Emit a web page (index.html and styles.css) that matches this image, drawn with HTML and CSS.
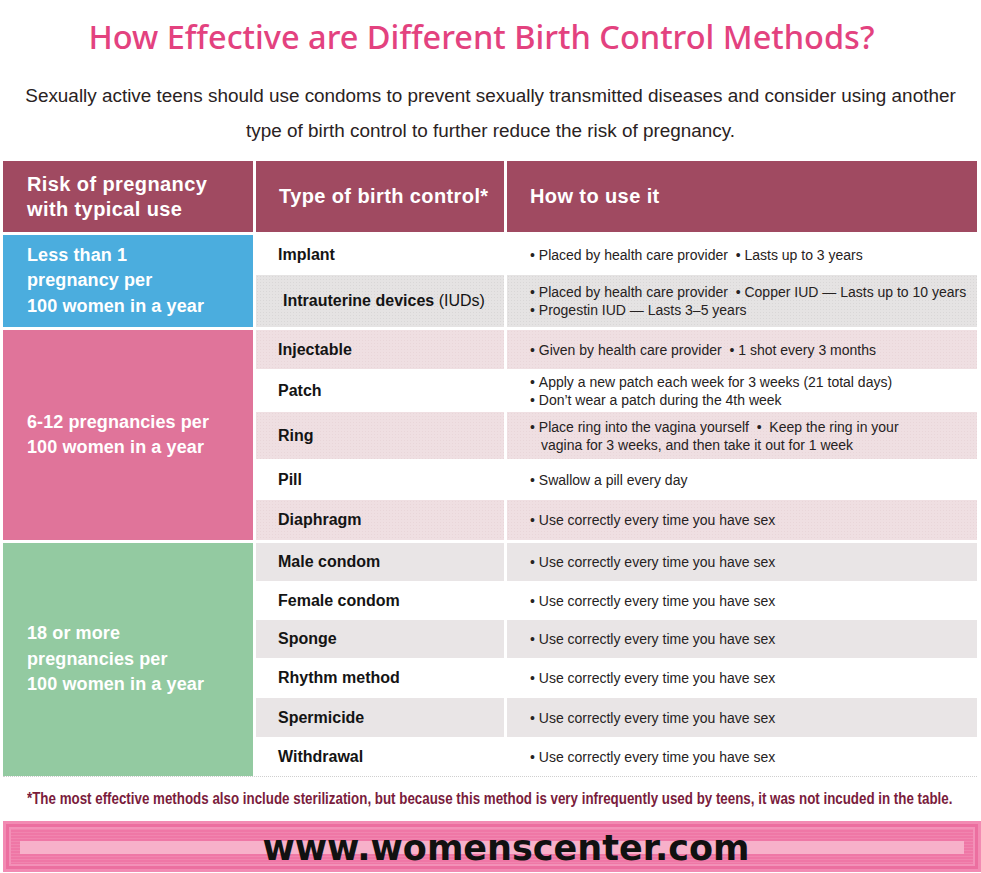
FILE: index.html
```html
<!DOCTYPE html>
<html lang="en">
<head>
<meta charset="utf-8">
<title>How Effective are Different Birth Control Methods?</title>
<link rel="stylesheet" href="styles.css">
</head>
<body>
<h1 class="title">How Effective are Different Birth Control Methods?</h1>
<p class="intro">Sexually active teens should use condoms to prevent sexually transmitted diseases and consider using another<br>type of birth control to further reduce the risk of pregnancy.</p>

<div class="chart">
  <div class="head">
    <div class="hcell hcell-risk">Risk of pregnancy<br>with typical use</div>
    <div class="hcell">Type of birth control*</div>
    <div class="hcell">How to use it</div>
  </div>

  <div class="group">
    <div class="risk risk-blue">Less than 1<br>pregnancy per<br>100 women in a year</div>
    <div class="rows">
      <div class="row r40">
        <div class="method">Implant</div>
        <div class="how">•&nbsp;Placed by health care provider&nbsp;&nbsp;•&nbsp;Lasts up to 3 years</div>
      </div>
      <div class="row r52 alt-gray">
        <div class="method method-indent">Intrauterine devices&nbsp;<span class="light">(IUDs)</span></div>
        <div class="how">•&nbsp;Placed by health care provider&nbsp;&nbsp;•&nbsp;Copper IUD — Lasts up to 10 years<br>•&nbsp;Progestin IUD — Lasts 3–5 years</div>
      </div>
    </div>
  </div>

  <div class="group">
    <div class="risk risk-pink">6-12 pregnancies per<br>100 women in a year</div>
    <div class="rows">
      <div class="row alt-pink">
        <div class="method">Injectable</div>
        <div class="how">•&nbsp;Given by health care provider&nbsp;&nbsp;•&nbsp;1 shot every 3 months</div>
      </div>
      <div class="row r43">
        <div class="method">Patch</div>
        <div class="how">•&nbsp;Apply a new patch each week for 3 weeks (21 total days)<br>•&nbsp;Don’t wear a patch during the 4th week</div>
      </div>
      <div class="row r47 alt-pink">
        <div class="method">Ring</div>
        <div class="how">•&nbsp;Place ring into the vagina yourself&nbsp;&nbsp;•&nbsp;&nbsp;Keep the ring in your<br><span class="cont">vagina for 3 weeks, and then take it out for 1 week</span></div>
      </div>
      <div class="row r41">
        <div class="method">Pill</div>
        <div class="how">•&nbsp;Swallow a pill every day</div>
      </div>
      <div class="row r40 alt-pink">
        <div class="method">Diaphragm</div>
        <div class="how">•&nbsp;Use correctly every time you have sex</div>
      </div>
    </div>
  </div>

  <div class="group group-last">
    <div class="risk risk-green">18 or more<br>pregnancies per<br>100 women in a year</div>
    <div class="rows">
      <div class="row r38 alt-mist">
        <div class="method">Male condom</div>
        <div class="how">•&nbsp;Use correctly every time you have sex</div>
      </div>
      <div class="row">
        <div class="method">Female condom</div>
        <div class="how">•&nbsp;Use correctly every time you have sex</div>
      </div>
      <div class="row r38 alt-mist">
        <div class="method">Sponge</div>
        <div class="how">•&nbsp;Use correctly every time you have sex</div>
      </div>
      <div class="row r40">
        <div class="method">Rhythm method</div>
        <div class="how">•&nbsp;Use correctly every time you have sex</div>
      </div>
      <div class="row alt-mist">
        <div class="method">Spermicide</div>
        <div class="how">•&nbsp;Use correctly every time you have sex</div>
      </div>
      <div class="row">
        <div class="method">Withdrawal</div>
        <div class="how">•&nbsp;Use correctly every time you have sex</div>
      </div>
    </div>
  </div>
</div>

<p class="note"><span class="note-text">*The most effective methods also include sterilization, but because this method is very infrequently used by teens, it was not incuded in the table.</span></p>

<div class="banner"><span class="banner-url">www.womenscenter.com</span></div>
</body>
</html>
```

FILE: styles.css
```css
html, body {
  margin: 0;
  padding: 0;
  background: #ffffff;
}

body {
  width: 981px;
  height: 873px;
  overflow: hidden;
  font-family: "Liberation Sans", Arial, sans-serif;
  color: #222;
}

.title {
  margin: 0;
  height: 72px;
  padding-right: 18px;
  display: flex;
  align-items: center;
  justify-content: center;
  font-family: "Noto Sans", sans-serif;
  font-weight: 500;
  font-size: 32.5px;
  color: #e3427f;
}

.intro {
  margin: 0;
  padding-top: 6px;
  text-align: center;
  font-size: 18.9px;
  line-height: 35px;
  color: #2a2222;
}

.chart {
  margin: 13px 0 0 3px;
  width: 974px;
  display: flex;
  flex-direction: column;
  gap: 3px;
}

.head {
  display: grid;
  grid-template-columns: 250px 248px 470px;
  column-gap: 3px;
  height: 71px;
}

.hcell {
  background: #a04a61;
  color: #fff;
  font-weight: bold;
  font-size: 20px;
  line-height: 25px;
  letter-spacing: 0.4px;
  display: flex;
  align-items: center;
  padding-left: 23px;
}

.hcell-risk {
  padding-left: 24px;
}

.group {
  display: grid;
  grid-template-columns: 250px 721px;
  column-gap: 3px;
}

.group-last {
  border-bottom: 1px dotted #cfcfcf;
}

.risk {
  display: flex;
  align-items: center;
  padding-left: 24px;
  color: #fff;
  font-weight: bold;
  font-size: 18px;
  line-height: 25.5px;
  letter-spacing: 0.1px;
}

.risk-blue { background: #4badde; }
.risk-pink { background: #e0749a; }
.risk-green { background: #93caa1; }

.rows {
  display: flex;
  flex-direction: column;
}

.row {
  display: grid;
  grid-template-columns: 248px 470px;
  column-gap: 3px;
  height: 39px;
}

.r38 { height: 38px; }
.r40 { height: 40px; }
.r41 { height: 41px; }
.r43 { height: 43px; }
.r47 { height: 47px; }
.r52 { height: 52px; }

.method {
  display: flex;
  align-items: center;
  padding-left: 22px;
  font-weight: bold;
  font-size: 16px;
  color: #141414;
}

.method-indent {
  padding-left: 27px;
}

.light {
  font-weight: normal;
}

.how {
  display: flex;
  flex-direction: column;
  justify-content: center;
  align-items: flex-start;
  padding-left: 23px;
  font-size: 14px;
  line-height: 18px;
  color: #262222;
  white-space: nowrap;
}

.cont {
  padding-left: 11px;
}

.alt-gray > div {
  background-color: #e5e3e3;
  background-image: radial-gradient(rgba(0, 0, 0, 0.05) 0.8px, transparent 1px);
  background-size: 3px 3px;
}

.alt-pink > div {
  background-color: #efdfe2;
  background-image: radial-gradient(rgba(120, 40, 60, 0.05) 0.8px, transparent 1px);
  background-size: 3px 3px;
}

.alt-mist > div {
  background-color: #e9e5e6;
}

.note {
  margin: 0;
  width: 981px;
  height: 44px;
  line-height: 44px;
  padding-left: 27px;
  box-sizing: border-box;
  white-space: nowrap;
  overflow: hidden;
}

.note-text {
  display: inline-block;
  font-weight: bold;
  font-size: 17px;
  color: #7a1c3c;
  transform: scaleX(0.785);
  transform-origin: left center;
}

.banner {
  margin-left: 3px;
  height: 51px;
  box-sizing: border-box;
  display: flex;
  align-items: center;
  justify-content: center;
  padding: 4px 0 0 28px;
  background:
    linear-gradient(#f7b1ca, #f7b1ca) 17px 20px / calc(100% - 34px) 13px no-repeat,
    repeating-linear-gradient(0deg, rgba(255, 255, 255, 0.10) 0 1px, transparent 1px 3px),
    #ef77a6;
  box-shadow: inset 0 0 0 3px #f28bb3, inset 0 0 0 6px #ec6fa0, inset 0 0 0 8px #f391b8;
}

.banner-url {
  font-family: "DejaVu Sans", sans-serif;
  font-weight: bold;
  font-size: 35px;
  color: #111;
  line-height: 1;
}
```
